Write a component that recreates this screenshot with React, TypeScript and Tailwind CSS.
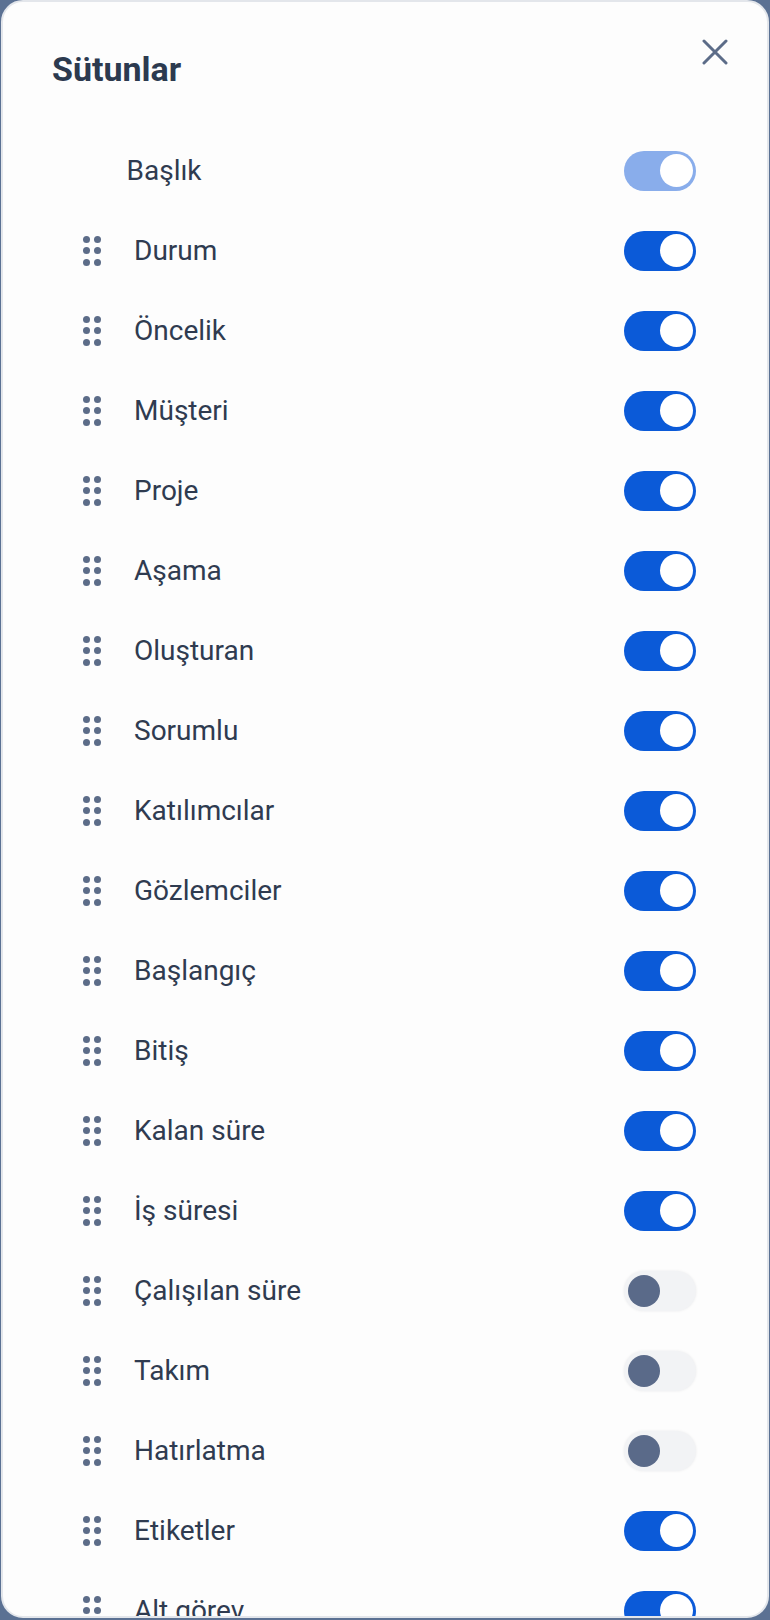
import { useState } from 'react';

type Column = {
	label: string;
	on: boolean;
};

const initialColumns: Column[] = [
	{ label: 'Durum', on: true },
	{ label: 'Öncelik', on: true },
	{ label: 'Müşteri', on: true },
	{ label: 'Proje', on: true },
	{ label: 'Aşama', on: true },
	{ label: 'Oluşturan', on: true },
	{ label: 'Sorumlu', on: true },
	{ label: 'Katılımcılar', on: true },
	{ label: 'Gözlemciler', on: true },
	{ label: 'Başlangıç', on: true },
	{ label: 'Bitiş', on: true },
	{ label: 'Kalan süre', on: true },
	{ label: 'İş süresi', on: true },
	{ label: 'Çalışılan süre', on: false },
	{ label: 'Takım', on: false },
	{ label: 'Hatırlatma', on: false },
	{ label: 'Etiketler', on: true },
	{ label: 'Alt görev', on: true },
];

function Toggle({
	on,
	disabled,
	onClick,
}: {
	on: boolean;
	disabled?: boolean;
	onClick?: () => void;
}) {
	const track = disabled
		? 'bg-[#89adeb] justify-end'
		: on
			? 'bg-[#0b5ad8] justify-end'
			: 'bg-[#f2f3f5] justify-start shadow-[0_0_3px_rgba(15,23,42,0.08)]';
	return (
		<button
			type="button"
			onClick={onClick}
			disabled={disabled}
			className={`flex h-[40px] w-[72px] shrink-0 items-center rounded-full px-[3.5px] ${track}`}>
			{on ? (
				<span className="h-[33px] w-[33px] rounded-full bg-white" />
			) : (
				<span className="ml-[0.5px] h-[32px] w-[32px] rounded-full bg-[#5a6a89]" />
			)}
		</button>
	);
}

function DragHandle() {
	return (
		<div className="grid w-[18px] shrink-0 grid-cols-2 gap-x-[4px] gap-y-[4.5px]">
			{[0, 1, 2, 3, 4, 5].map((i) => (
				<span key={i} className="h-[7px] w-[7px] rounded-full bg-[#5c6c88]" />
			))}
		</div>
	);
}

export default function App() {
	const [columns, setColumns] = useState(initialColumns);

	const toggle = (index: number) => {
		setColumns((prev) =>
			prev.map((c, i) => (i === index ? { ...c, on: !c.on } : c)),
		);
	};

	return (
		<div
			className="h-[1620px] w-[770px] bg-[#5b7193] px-[1px] pb-[2px]"
			style={{ fontFamily: 'Roboto, "Noto Sans", sans-serif' }}>
			<div className="flex h-full flex-col overflow-hidden rounded-[22px] border-2 border-[#e3e6eb] bg-[#fdfdfd]">
				{/* Header */}
				<div className="flex h-[128.5px] shrink-0 items-start justify-between pl-[49px] pr-[39px]">
					<h1 className="mt-[46px] text-[34px] font-bold leading-[42px] text-[#2c3a4f]">
						Sütunlar
					</h1>
					<button type="button" className="mt-[37px]">
						<svg width="26" height="26" viewBox="0 0 26 26" fill="none">
							<path
								d="M2 2L24 24M24 2L2 24"
								stroke="#5c6c88"
								strokeWidth="3"
								strokeLinecap="round"
							/>
						</svg>
					</button>
				</div>

				{/* Rows */}
				<div className="flex flex-col">
					<div className="flex h-[80px] shrink-0 items-center pl-[123.5px] pr-[71px]">
						<span className="text-[28px] text-[#2f3b50]">Başlık</span>
						<div className="ml-auto">
							<Toggle on disabled />
						</div>
					</div>
					{columns.map((col, i) => (
						<div
							key={col.label}
							className="flex h-[80px] shrink-0 items-center pl-[80px] pr-[71px]">
							<DragHandle />
							<span className="ml-[33px] text-[28px] text-[#2f3b50]">
								{col.label}
							</span>
							<div className="ml-auto">
								<Toggle on={col.on} onClick={() => toggle(i)} />
							</div>
						</div>
					))}
				</div>
			</div>
		</div>
	);
}
